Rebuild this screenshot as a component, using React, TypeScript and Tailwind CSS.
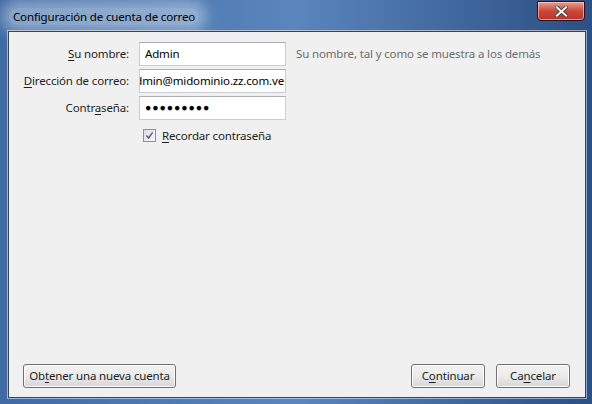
import React from "react";

const font = { fontFamily: '"Segoe UI", "Noto Sans", "Liberation Sans", sans-serif' };

function U({ children }: { children: React.ReactNode }) {
  return <span className="underline underline-offset-2">{children}</span>;
}

function Field({ label, children, end = false }: { label: React.ReactNode; children: React.ReactNode; end?: boolean }) {
  return (
    <div className="flex items-center">
      <div className="w-[121px] pr-[1px] text-right text-[11.5px] tracking-[-0.15px] text-[#1e1e1e]">{label}</div>
      <div
        className={`ml-[9px] flex h-[24px] w-[147px] items-center overflow-hidden border border-[#c9cdd3] border-t-[#abadb3] bg-white text-[11.5px] tracking-[-0.15px] text-black whitespace-nowrap ${
          end ? "justify-end pr-[1px]" : "px-[5px]"
        }`}
      >
        {children}
      </div>
    </div>
  );
}

function Btn({ children, className = "" }: { children: React.ReactNode; className?: string }) {
  return (
    <button
      type="button"
      className={`h-[24px] rounded-[3px] border border-[#707070] bg-gradient-to-b from-[#f2f2f2] via-[#ebebeb] to-[#d5d5d5] text-[11.5px] tracking-[-0.15px] text-[#1e1e1e] shadow-[inset_0_0_0_1px_#fcfcfc] ${className}`}
    >
      {children}
    </button>
  );
}

export default function App() {
  return (
    <div
      style={font}
      className="flex h-[404px] w-[592px] flex-col bg-gradient-to-r from-[#3f6aa3] via-[#5a86bd] to-[#2c4f84]"
    >
      {/* title bar */}
      <div className="flex h-[31px] shrink-0 items-start">
        <div className="ml-[9px] mt-[8px] rounded-[12px] bg-[#dfe8f4]/45 px-1 text-[11.5px] tracking-[-0.15px] text-black shadow-[0_0_14px_8px_rgba(223,232,244,0.45)]">
          Configuración de cuenta de correo
        </div>
        <div className="ml-auto mr-[7px] mt-[1px] flex h-[20px] w-[48px] items-center justify-center rounded-b-[4px] border border-[#3b0d0a] bg-gradient-to-b from-[#e2a096] via-[#c8493a] to-[#c0302a] shadow-[inset_0_0_0_1px_rgba(255,220,210,0.6)]">
          <svg viewBox="0 0 14 12" className="h-[11px] w-[13px]">
            <path d="M2 1.5 L12 10.5 M12 1.5 L2 10.5" stroke="#3a3a3a" strokeWidth={4} strokeLinecap="square" />
            <path d="M2 1.5 L12 10.5 M12 1.5 L2 10.5" stroke="#fff" strokeWidth={2.2} strokeLinecap="square" />
          </svg>
        </div>
      </div>

      {/* content */}
      <div className="mb-[6px] ml-[8px] mr-[6px] flex flex-1 flex-col border border-[#34455c] bg-[#f0f0f0] shadow-[0_0_0_1px_rgba(255,255,255,0.5)]">
        <div className="mt-[10px] flex flex-col gap-[3px]">
          <div className="flex items-center">
            <Field
              label={
                <>
                  <U>S</U>u nombre:
                </>
              }
            >
              Admin
            </Field>
            <div className="ml-[10px] text-[11.5px] tracking-[-0.15px] text-[#6d6d6d]">Su nombre, tal y como se muestra a los demás</div>
          </div>
          <Field
            end
            label={
              <>
                <U>D</U>irección de correo:
              </>
            }
          >
            <span className="shrink-0">admin@midominio.zz.com.ve</span>
          </Field>
          <Field
            label={
              <>
                Contr<U>a</U>seña:
              </>
            }
          >
            <span className="text-[10.5px] tracking-[0.9px]">●●●●●●●●●</span>
          </Field>
        </div>
        <div className="ml-[134px] mt-[7px] flex items-center gap-[6px] text-[11.5px] tracking-[-0.15px] text-[#1e1e1e]">
          <div className="flex h-[13px] w-[13px] items-center justify-center border border-[#8e8f8f] bg-gradient-to-br from-[#dcdcdc] to-[#fbfbfb]">
            <svg viewBox="0 0 10 10" className="h-[9px] w-[9px]">
              <path d="M1.5 5 L4 7.8 L8.5 1.5" fill="none" stroke="#4a5f97" strokeWidth={1.6} />
            </svg>
          </div>
          <span>
            <U>R</U>ecordar contraseña
          </span>
        </div>

        <div className="mt-auto mb-[9px] flex items-center pl-[14px] pr-[15px]">
          <Btn className="w-[153px]">
            Ob<U>t</U>ener una nueva cuenta
          </Btn>
          <Btn className="ml-auto w-[74px]">
            C<U>o</U>ntinuar
          </Btn>
          <Btn className="ml-[11px] w-[74px]">
            Ca<U>n</U>celar
          </Btn>
        </div>
      </div>
    </div>
  );
}
